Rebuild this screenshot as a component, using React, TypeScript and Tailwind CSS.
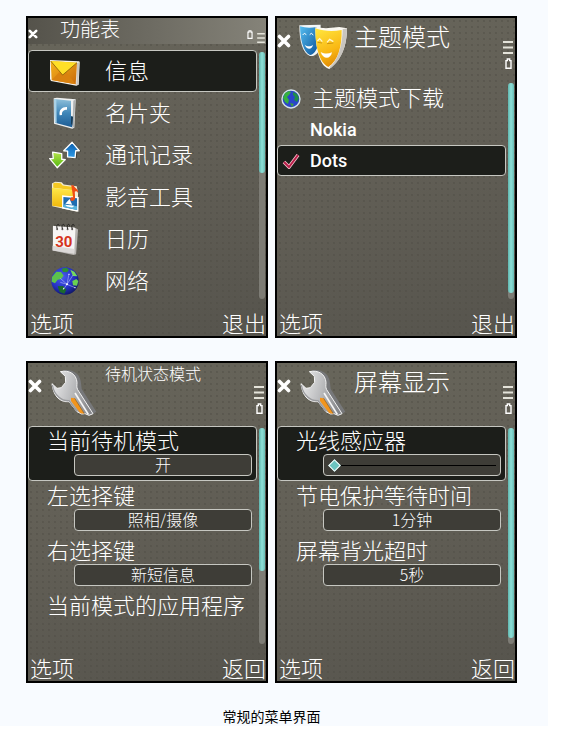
import React, { useState } from 'react';
import clsx from 'clsx';

interface IconProps {
  className?: string;
}

interface MenuEntry {
  label: string;
  icon: React.ReactNode;
}

interface Setting {
  label: string;
  value?: string;
  options?: string[];
  slider?: boolean;
}

const MailIcon = () => (
  <svg viewBox="28 30 96 84" className="mt-1 h-7 w-8">
    <defs>
      <linearGradient id="mail" x1="0" y1="0" x2="1" y2="1">
        <stop offset="0" stopColor="#f7b41c" />
        <stop offset="1" stopColor="#c8690a" />
      </linearGradient>
    </defs>
    <path d="M31 33L118 37Q121 38 120 42L117 107L110 110L34 96L31 90Z" fill="#f4f1ea" />
    <path d="M112 42L119 40L116 107L110 108Z" fill="#c9c6c0" />
    <path d="M33 36L112 41L108 106L36 93Z" fill="url(#mail)" />
    <path d="M36 93L60 68L67 76L80 70L108 106Z" fill="#d9820f" />
    <path d="M33 36L112 41L69 78Z" fill="#ffdf27" />
    <path d="M33 36L69 78L112 41" fill="none" stroke="#6d4a05" strokeWidth="2" />
  </svg>
);

const ContactsIcon = () => (
  <svg viewBox="28 142 96 96" className="size-8">
    <defs>
      <linearGradient id="book" x1="0" y1="0" x2="0" y2="1">
        <stop offset="0" stopColor="#8fc0da" />
        <stop offset="0.5" stopColor="#3f86b8" />
        <stop offset="1" stopColor="#1d5c94" />
      </linearGradient>
    </defs>
    <path d="M42 146L52 144L108 149L104 234L98 237L43 222Z" fill="#eef0f0" />
    <path d="M101 153L107 150L103 233L98 235Z" fill="#aeb1b2" />
    <path d="M44 148L94 153L94 200L100 201L97 233L46 219Z" fill="url(#book)" />
    <path d="M44 148L50 148L51 220L46 219Z" fill="#a9d2e6" />
    <path d="M60 197C57 180 68 171 82 172L82 180C72 180 66 184 67 196Z" fill="#fff" />
    <path d="M94 200L94 222L98 228L100 201Z" fill="#1b3d57" />
  </svg>
);

const LogIcon = () => (
  <svg viewBox="26 272 98 86" className="h-7 w-8">
    <defs>
      <linearGradient id="up" x1="0" y1="0" x2="0" y2="1">
        <stop offset="0" stopColor="#0a5cab" />
        <stop offset="1" stopColor="#2f9be8" />
      </linearGradient>
      <linearGradient id="down" x1="0" y1="0" x2="0" y2="1">
        <stop offset="0" stopColor="#b7e34c" />
        <stop offset="1" stopColor="#52b80e" />
      </linearGradient>
    </defs>
    <path d="M100 275L125 304L113 305L111 326L90 324Z" fill="#3e3d38" />
    <path
      d="M97 276L119 302L108 302L106 323L83 321L83 303L71 302Z"
      fill="url(#up)"
      stroke="#fff"
      strokeWidth="4"
      strokeLinejoin="round"
    />
    <path
      d="M37 306L65 311L65 328L76 329L51 354L28 326L39 326Z"
      fill="url(#down)"
      stroke="#fff"
      strokeWidth="4"
      strokeLinejoin="round"
    />
  </svg>
);

const MediaIcon = () => (
  <svg viewBox="28 22 96 98" className="size-8">
    <defs>
      <linearGradient id="folder" x1="0" y1="0" x2="0" y2="1">
        <stop offset="0" stopColor="#ffe94a" />
        <stop offset="1" stopColor="#efb204" />
      </linearGradient>
    </defs>
    <path d="M36 30L46 24L66 26L72 33L112 38L116 60L114 116L37 99Z" fill="#f3edd2" />
    <path d="M40 29L48 27L63 29L69 36L102 40L103 50L40 43Z" fill="#f5c921" />
    <path d="M36 43L100 50L104 108L37 98Z" fill="url(#folder)" />
    <path d="M67 66L118 71L117 116L67 106Z" fill="#fff" />
    <path d="M71 71L113 75L113 111L71 102Z" fill="#1f6cb0" />
    <path d="M71 93L113 99L113 111L71 102Z" fill="#58b4dc" />
    <path d="M90 77L98 95L77 92ZM76 95L105 98L98 103L82 100Z" fill="#fff" />
    <path d="M95 34L103 36C105 45 118 46 116 58C112 52 107 53 106 55L107 76C103 86 91 84 92 77C93 71 98 71 101 72Z" fill="#f04d14" />
  </svg>
);

const CalendarIcon = () => (
  <svg viewBox="28 142 96 98" className="size-8">
    <path d="M41 152L108 157L116 162L110 238L102 240L38 226Z" fill="#b7b4b1" />
    <path d="M39 153Q39 150 43 151L104 156Q108 157 108 161L104 235L39 224Z" fill="#f7f5f4" />
    <path d="M38 212L105 222L104 236L38 226Z" fill="#dcd9d8" />
    {[54, 70, 86, 100].map((x) => (
      <g key={x}>
        <circle cx={x - 2} cy="161" r="3" fill="#5d5a57" />
        <path d={`M${x - 2} 160C${x - 7} 145 ${x + 5} 142 ${x + 4} 152`} fill="none" stroke="#23221f" strokeWidth="3" />
      </g>
    ))}
    <text x="46" y="215" fontFamily="Roboto" fontWeight="700" fontSize="46" fill="#d5331c">
      30
    </text>
  </svg>
);

const NetworkIcon = () => (
  <svg viewBox="28 270 96 96" className="size-8">
    <defs>
      <radialGradient id="net" cx="0.4" cy="0.35" r="0.7">
        <stop offset="0" stopColor="#4a5cf0" />
        <stop offset="0.6" stopColor="#2631c4" />
        <stop offset="1" stopColor="#0e1560" />
      </radialGradient>
    </defs>
    <circle cx="76" cy="318" r="41" fill="url(#net)" />
    <path d="M37 306L50 290L64 291L72 302L64 312L54 314L46 325L36 320Z" fill="#5cc24d" />
    <path d="M66 281L80 278L88 284L82 292L70 291Z" fill="#2f8f36" />
    <path d="M92 284L104 290L113 304L100 303Z" fill="#77d95e" />
    <path d="M98 318L110 312L116 318L112 332L100 331Z" fill="#6ad052" />
    <path d="M54 334L70 333L80 344L74 356L60 351Z" fill="#1c6b2c" />
    <g fill="none" stroke="#c9d4ff" strokeWidth="1.5">
      <path d="M62 310L82 328L100 300M82 328L70 345M82 328L106 338M88 296L82 328M62 322L82 328" />
    </g>
    <g fill="#fff">
      <circle cx="82" cy="328" r="3" />
      <circle cx="88" cy="298" r="2" />
      <circle cx="106" cy="338" r="2" />
      <circle cx="72" cy="340" r="2" />
    </g>
  </svg>
);

const EarthIcon = () => (
  <svg viewBox="0 0 20 20" className="size-5">
    <circle cx="10" cy="10" r="9" fill="#2a45c9" stroke="#d5e2ea" strokeWidth="1.4" />
    <path d="M2 9L4 4L8 2L10 3L8 6L6 8L8 11L7 15L4 13Z" fill="#35b03e" />
    <path d="M12 3L16 5L18 9L16 13L13 11L14 8L12 6Z" fill="#1e8d4b" />
    <path d="M9 14L13 15L11 18Z" fill="#3f9e3f" />
  </svg>
);

const MasksIcon = () => (
  <svg viewBox="69 18 144 144" className="size-12">
    <defs>
      <linearGradient id="blueMask" x1="0" y1="0" x2="1" y2="1">
        <stop offset="0" stopColor="#55bdf0" />
        <stop offset="1" stopColor="#0b559d" />
      </linearGradient>
      <linearGradient id="goldMask" x1="0.3" y1="0" x2="0.6" y2="1">
        <stop offset="0" stopColor="#ffe23a" />
        <stop offset="0.6" stopColor="#f9b814" />
        <stop offset="1" stopColor="#e08a06" />
      </linearGradient>
    </defs>
    <path d="M70 22L134 20L132 90C126 110 112 116 102 114C80 106 70 70 70 22Z" fill="#f2f6f8" />
    <path d="M72 25C88 30 104 30 122 27L124 88C118 104 108 112 102 111C82 102 73 68 72 25Z" fill="url(#blueMask)" />
    <path d="M80 51L85 46L91 50M101 50L106 46L112 51" fill="none" stroke="#fff" strokeWidth="3" />
    <path d="M86 80C94 86 104 86 111 80C108 96 92 96 86 80Z" fill="#fff" />
    <path d="M118 28L150 31L190 27L213 31C213 70 205 118 160 153C138 148 118 112 118 28Z" fill="#faf8f2" />
    <path d="M200 34L213 31C213 70 203 122 164 151L160 148C190 124 199 76 200 34Z" fill="#c8c5bf" />
    <path d="M118 31C144 40 170 41 197 36C198 84 187 128 157 147C130 134 118 88 118 31Z" fill="url(#goldMask)" />
    <path d="M124 69L131 62L139 71M153 73L161 64L172 71" fill="none" stroke="#fff6cf" strokeWidth="4" />
    <path d="M125 73L138 75M153 77L172 75" stroke="#b87a08" strokeWidth="2" />
    <path d="M134 102C146 108 156 108 168 103C164 126 140 124 134 102Z" fill="#fff" />
  </svg>
);

const WrenchIcon = ({ id }: { id: string }) => (
  <svg viewBox="71 24 144 144" className="size-12">
    <defs>
      <linearGradient id={id} x1="0" y1="0.3" x2="1" y2="0.6">
        <stop offset="0" stopColor="#e9e9ea" />
        <stop offset="0.5" stopColor="#b9babc" />
        <stop offset="1" stopColor="#85868a" />
      </linearGradient>
    </defs>
    <path d="M110 28C142 22 162 40 164 66L166 84L210 152L194 162L150 90Z" fill="#77787a" />
    <path
      d="M102 32C130 26 150 40 152 64C152 74 150 78 154 86L200 158L188 163L176 158L166 159L152 152L128 122C104 124 82 110 77 68L92 82L105 80L118 64L117 46Z"
      fill={`url(#${id})`}
      stroke="#f4f4f4"
      strokeWidth="3"
      strokeLinejoin="round"
    />
    <path d="M78 72C84 104 106 120 128 119L152 152" fill="none" stroke="#9a9b9e" strokeWidth="4" />
    <path d="M134 110L145 112L174 158L162 157L134 120Z" fill="#f2951d" />
    <path d="M145 112L174 158" stroke="#8c5a1c" strokeWidth="2" />
    <path d="M146 96L186 160" stroke="#f6f6f6" strokeWidth="5" />
  </svg>
);

const CloseIcon = ({ className }: IconProps) => (
  <svg viewBox="0 0 14 14" className={className}>
    <path d="M2.5 2.5L11.5 11.5M11.5 2.5L2.5 11.5" stroke="#fff" strokeWidth="3.6" strokeLinecap="round" />
  </svg>
);

const SignalIcon = ({ className }: IconProps) => (
  <svg viewBox="0 0 10 13" className={className}>
    <path d="M0 1H10M0 6.5H10M0 12H10" stroke="#e4e3da" strokeWidth="1.8" />
  </svg>
);

const BatteryIcon = ({ className }: IconProps) => (
  <svg viewBox="0 0 7 11" className={className}>
    <path d="M1 10.2V2.6H2.3V1H4.7V2.6H6V10.2Z" fill="none" stroke="#fff" strokeWidth="1.4" />
  </svg>
);

const CheckIcon = () => (
  <svg viewBox="0 0 18 16" className="h-4 w-[18px]">
    <path d="M2 9L7 14L16 2" fill="none" stroke="#f3c3cd" strokeWidth="3.6" />
    <path d="M2 9L7 14L16 2" fill="none" stroke="#b81d48" strokeWidth="2" />
  </svg>
);

const menuEntries: MenuEntry[] = [
  { label: '信息', icon: <MailIcon /> },
  { label: '名片夹', icon: <ContactsIcon /> },
  { label: '通讯记录', icon: <LogIcon /> },
  { label: '影音工具', icon: <MediaIcon /> },
  { label: '日历', icon: <CalendarIcon /> },
  { label: '网络', icon: <NetworkIcon /> },
];

const themes = ['Nokia', 'Dots'];

const standbySettings: Setting[] = [
  { label: '当前待机模式', value: '开', options: ['开', '关'] },
  { label: '左选择键', value: '照相/摄像', options: ['照相/摄像', '新短信息'] },
  { label: '右选择键', value: '新短信息', options: ['新短信息', '照相/摄像'] },
  { label: '当前模式的应用程序' },
];

const displaySettings: Setting[] = [
  { label: '光线感应器', slider: true },
  { label: '节电保护等待时间', value: '1分钟', options: ['1分钟', '2分钟', '5分钟'] },
  { label: '屏幕背光超时', value: '5秒', options: ['5秒', '10秒', '15秒'] },
];

const SELECTED = 'border-[#c6c7c1] bg-[#1c1e1a]';

interface PhoneProps {
  header: React.ReactNode;
  children: React.ReactNode;
  scroll: number;
  backLabel: string;
}

function Phone({ header, children, scroll, backLabel }: PhoneProps) {
  return (
    <section className="flex min-h-[322px] flex-col border-2 border-black bg-[radial-gradient(circle,#4f4d4570_1px,transparent_1px),linear-gradient(160deg,#68665b_0%,#625f56_45%,#56544d_100%)] bg-[size:6px_6px,100%_100%] text-white">
      {header}
      <div className="flex grow gap-0.5 pr-px">
        <div className="min-w-0 flex-1">{children}</div>
        <div className="mt-0.5 mb-[3px] w-1.5 rounded-full bg-[#7d7c75]">
          <div
            className="rounded-full bg-gradient-to-r from-[#5fb5ae] via-[#8fe0d8] to-[#68bdb6]"
            style={{ height: `${scroll}%` }}
          />
        </div>
      </div>
      <footer className="flex h-[34px] items-end justify-between pb-0.5 pl-0.5 text-[22px] leading-6">
        <button type="button">选项</button>
        <button type="button">{backLabel}</button>
      </footer>
    </section>
  );
}

interface TallHeaderProps {
  title: string;
  icon: React.ReactNode;
  small?: boolean;
}

function TallHeader({ title, icon, small }: TallHeaderProps) {
  return (
    <header className="flex h-[63px] items-start">
      <button type="button" aria-label="关闭" className="mt-4">
        <CloseIcon className="size-3.5" />
      </button>
      <div className="mt-1.5 mr-[7px] ml-2">{icon}</div>
      <h2 className={clsx('flex-1 whitespace-nowrap', small ? 'text-base leading-5' : 'text-2xl leading-9')}>
        {title}
      </h2>
      <div className="mt-[23px] mr-0.5 flex flex-col items-center gap-1">
        <SignalIcon className="h-[13px] w-2.5" />
        <BatteryIcon className="h-[11px] w-[7px]" />
      </div>
    </header>
  );
}

function SettingRow({ setting, selected, onSelect }: { setting: Setting; selected: boolean; onSelect: () => void }) {
  const [value, setValue] = useState<string>(setting.value ?? '');
  const [level, setLevel] = useState<number>(0);

  return (
    <label
      onClick={onSelect}
      className={clsx('block rounded-sm border pr-1 pb-1', selected ? SELECTED : 'border-transparent')}
    >
      <span className="block pl-[18px] text-[22px] leading-6 whitespace-nowrap">{setting.label}</span>
      {setting.options && (
        <select
          value={value}
          onChange={(e) => setValue(e.target.value)}
          className="mt-[3px] ml-[45px] block h-[22px] w-[calc(100%-45px)] appearance-none rounded-sm border border-[#c6c7c1] bg-[#3e3d37] pb-0.5 text-center text-base leading-[18px] [text-align-last:center]"
        >
          {setting.options.map((option) => (
            <option key={option}>{option}</option>
          ))}
        </select>
      )}
      {setting.slider && (
        <span className="mt-[3px] ml-[45px] flex h-[22px] items-center rounded-sm border border-[#c6c7c1] bg-[#3e3d37] pr-1 pl-1.5">
          <input
            type="range"
            min={0}
            max={10}
            value={level}
            onChange={(e) => setLevel(Number(e.target.value))}
            className="h-4 w-full appearance-none bg-[linear-gradient(#000,#000)] bg-[size:100%_1px] bg-center bg-no-repeat [&::-webkit-slider-thumb]:size-[9px] [&::-webkit-slider-thumb]:rotate-45 [&::-webkit-slider-thumb]:appearance-none [&::-webkit-slider-thumb]:border [&::-webkit-slider-thumb]:border-white [&::-webkit-slider-thumb]:bg-[#6cc4c0]"
          />
        </span>
      )}
    </label>
  );
}

function SettingList({ settings }: { settings: Setting[] }) {
  const [active, setActive] = useState<number>(0);

  return (
    <>
      {settings.map((setting, index) => (
        <SettingRow
          key={setting.label}
          setting={setting}
          selected={index === active}
          onSelect={() => setActive(index)}
        />
      ))}
    </>
  );
}

function MenuScreen() {
  const [active, setActive] = useState<number>(0);

  return (
    <Phone
      scroll={49}
      backLabel="退出"
      header={
        <header className="mb-1.5 flex h-[26px] items-start bg-gradient-to-r from-[#55534b] to-[#858379]">
          <button type="button" aria-label="关闭" className="mt-[11px]">
            <CloseIcon className="size-2.5" />
          </button>
          <h2 className="ml-[22px] flex-1 text-xl leading-[22px]">功能表</h2>
          <BatteryIcon className="mt-3 mr-1 h-[9px] w-1.5" />
          <SignalIcon className="mt-[15px] mr-px h-2.5 w-2" />
        </header>
      }
    >
      {menuEntries.map((entry, index) => (
        <button
          key={entry.label}
          type="button"
          onClick={() => setActive(index)}
          className={clsx(
            'flex h-[42px] w-full items-center gap-6 rounded-sm border pl-5 text-[22px]',
            index === active ? SELECTED : 'border-transparent'
          )}
        >
          {entry.icon}
          <span className="pb-1">{entry.label}</span>
        </button>
      ))}
    </Phone>
  );
}

function ThemeScreen() {
  const [theme, setTheme] = useState<string>('Dots');

  return (
    <Phone scroll={97} backLabel="退出" header={<TallHeader title="主题模式" icon={<MasksIcon />} />}>
      <button type="button" className="mt-0.5 flex h-[31px] w-full items-center gap-[11px] pl-1 text-[22px]">
        <EarthIcon />
        <span className="pb-1">主题模式下载</span>
      </button>
      {themes.map((name) => (
        <label
          key={name}
          className={clsx(
            'flex h-[31px] items-center rounded-sm border pl-1 font-[Roboto] text-lg font-medium',
            theme === name ? SELECTED : 'border-transparent'
          )}
        >
          <input
            type="radio"
            name="theme"
            checked={theme === name}
            onChange={() => setTheme(name)}
            className="sr-only"
          />
          <span className="w-7">{theme === name && <CheckIcon />}</span>
          {name}
        </label>
      ))}
    </Phone>
  );
}

export default function App() {
  return (
    <main className="bg-white font-['Noto_Sans_CJK_SC',sans-serif] font-light">
      <figure className="mr-[13px] bg-[#f8fbff] pt-4 pr-[31px] pl-[26px]">
        <div className="grid grid-cols-2 gap-x-[7px] gap-y-[23px]">
          <MenuScreen />
          <ThemeScreen />
          <Phone
            scroll={66}
            backLabel="返回"
            header={<TallHeader small title="待机状态模式" icon={<WrenchIcon id="wrenchStandby" />} />}
          >
            <SettingList settings={standbySettings} />
          </Phone>
          <Phone
            scroll={97}
            backLabel="返回"
            header={<TallHeader title="屏幕显示" icon={<WrenchIcon id="wrenchDisplay" />} />}
          >
            <SettingList settings={displaySettings} />
          </Phone>
        </div>
        <figcaption className="mt-[23px] text-center text-sm leading-5 font-normal text-black">常规的菜单界面</figcaption>
      </figure>
    </main>
  );
}
